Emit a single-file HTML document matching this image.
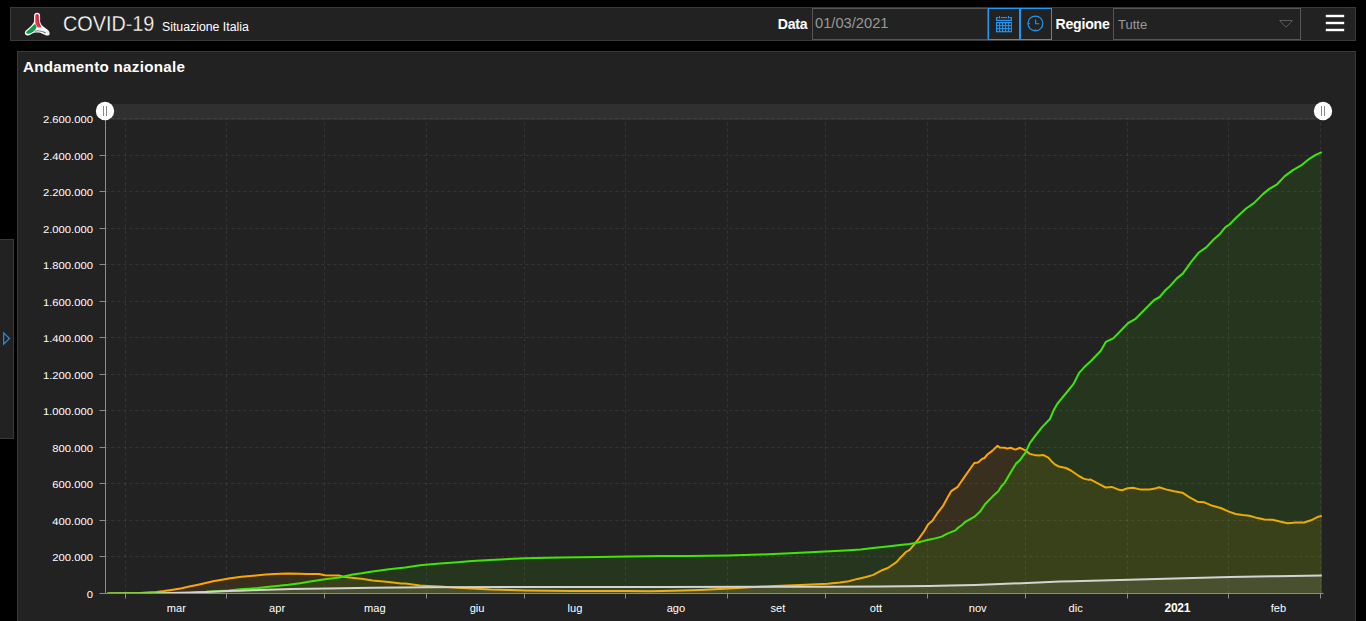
<!DOCTYPE html>
<html lang="it">
<head>
<meta charset="utf-8">
<title>COVID-19 Situazione Italia</title>
<style>
html,body{margin:0;padding:0;background:#000;width:1366px;height:621px;overflow:hidden;}
body{font-family:"Liberation Sans",sans-serif;color:#fff;position:relative;}
.hdr{position:absolute;left:10px;top:7px;width:1344px;height:32px;border:1px solid #3a3a3a;background:#222;}
.panel{position:absolute;left:17px;top:51px;width:1337px;height:600px;border:1px solid #3a3a3a;background:#222;}
.side{position:absolute;left:0;top:239px;width:13px;height:198px;border:1px solid #3a3a3a;border-left:none;background:#222;}
.abs{position:absolute;white-space:nowrap;line-height:1;}
.t1{left:63.3px;top:13px;font-size:22px;transform:scaleX(0.9);transform-origin:0 0;-webkit-text-stroke:0.3px #222;}
.t2{left:162px;top:21px;font-size:12.3px;}
.ptitle{left:23px;top:59.4px;font-size:15.2px;font-weight:700;letter-spacing:0.28px;}
.lbl{font-size:14.1px;font-weight:700;top:17px;letter-spacing:-0.22px;}
.inp{position:absolute;left:812px;top:8px;width:174px;height:30px;border:1px solid #555;background:#222;}
.inp span{position:absolute;left:2px;top:6.5px;font-size:14.7px;color:#999;line-height:1;}
.btn{position:absolute;top:8px;width:30px;height:30px;border:1px solid #2196f3;background:#222;}
.sel{position:absolute;left:1113px;top:8px;width:186px;height:30px;border:1px solid #555;background:#222;}
.sel span{position:absolute;left:4px;top:9.3px;font-size:13px;color:#999;line-height:1;}
.chart{position:absolute;left:0;top:0;}
svg{display:block;}
</style>
</head>
<body>
<div class="hdr"></div>
<div class="panel"></div>
<div class="side"></div>
<svg class="chart" style="position:absolute;left:0;top:0" width="60" height="45" viewBox="0 0 60 45">
<path d="M37.1,12.8 C38.9,12.8 40.1,13.9 40.1,15.6 L40.1,21.2 C40.4,23.2 41.3,24.9 43.2,26.6 C44.4,27.6 45.6,28.3 46.6,29 C48.2,30.1 49.3,31.3 49.6,33 C49.8,34.4 49.2,35.3 48,35.5 C47.2,35.6 46.4,35.5 45.6,35.2 C43.6,34.4 42.2,33.4 40.9,33 C39.6,32.6 38.3,32.6 36.9,32.6 C35.6,32.6 34.4,32.7 33.3,33 C32.2,33.3 31.6,33.9 30.6,34.5 C29.6,35 28.6,35.4 27.6,35.4 C26.4,35.4 25.4,34.9 25,33.8 C24.6,32.7 25,31.5 25.9,30.5 C26.9,29.4 27.9,28.8 28.9,28 C30.5,26.7 31.6,25.6 32.5,24.3 C33.3,23.2 33.9,22.2 34.1,21.2 L34.1,15.6 C34.1,13.9 35.3,12.8 37.1,12.8 Z" fill="#fff"/>
<path d="M37.1,14 C38.3,14 38.9,14.7 38.9,15.8 L38.9,21.2 C39.1,22.4 39.5,23.4 40.1,24.5 C40.5,25.4 41,26.2 41.6,27.2 L37.7,27.5 C37.2,26.8 36.8,26 36.4,25.2 C36,24.4 35.6,23.6 35.3,22.6 L35.3,15.8 C35.3,14.7 35.9,14 37.1,14 Z" fill="#ea2f4b"/>
<path d="M37.3,15 C37.9,17 38,19 38.3,21.3 C38.6,23 39.2,24.6 40,26" stroke="#c2203a" stroke-width="0.7" fill="none"/>
<path d="M35.1,23.4 C35.5,24.4 35.9,25.3 36.5,26.3 C36.6,27.1 36.4,27.8 36,28.6 C35.6,29.3 35.2,29.8 34.6,30.4 C34,31 33.5,31.5 32.8,32 C32,32.6 31.1,33.1 30.1,33.5 C29.2,33.8 28.3,33.9 27.4,33.8 C26.5,33.6 26,33.2 26.1,32.6 C26.2,32 26.5,31.5 27.1,31 C28,30.2 28.8,29.6 29.7,28.9 C30.9,27.9 31.9,26.9 32.9,25.8 C33.7,25 34.5,24.2 35.1,23.4 Z" fill="#17994a"/>
<path d="M34.6,31.2 C36.8,30.6 39.2,30.7 41.4,31.3 C43,31.7 44.4,32.4 45.8,33" stroke="#7c7c7c" stroke-width="1.1" fill="none"/>
<path d="M47.2,31.4 C47.8,32.2 48.1,33 48,33.9" stroke="#b5b5b5" stroke-width="0.6" fill="none"/>
</svg>
<div class="abs t1">COVID-19</div>
<div class="abs t2">Situazione Italia</div>
<div class="abs lbl" style="left:777.7px">Data</div>
<div class="inp"><span>01/03/2021</span></div>
<div class="btn" style="left:988px">
<svg width="30" height="30" viewBox="0 0 30 30" style="position:absolute;left:0;top:0">
<g fill="#2196f3">
<rect x="7" y="13" width="16" height="10.3"/>
<rect x="7" y="8" width="1.2" height="4"/><rect x="21.8" y="8" width="1.2" height="4"/>
<rect x="7" y="10.8" width="16" height="1.2"/>
<rect x="7" y="8" width="2.6" height="1.1"/><rect x="12" y="8" width="6" height="1.1"/><rect x="20.4" y="8" width="2.6" height="1.1"/>
<rect x="10" y="7" width="1.1" height="2.6"/><rect x="18.9" y="7" width="1.1" height="2.6"/>
</g>
<g fill="#222">
<rect x="8.2" y="14.2" width="1.9" height="1.9"/><rect x="11.2" y="14.2" width="1.9" height="1.9"/><rect x="14.2" y="14.2" width="1.9" height="1.9"/><rect x="17.2" y="14.2" width="1.9" height="1.9"/><rect x="20.2" y="14.2" width="1.9" height="1.9"/>
<rect x="8.2" y="17.2" width="1.9" height="1.9"/><rect x="11.2" y="17.2" width="1.9" height="1.9"/><rect x="14.2" y="17.2" width="1.9" height="1.9"/><rect x="17.2" y="17.2" width="1.9" height="1.9"/><rect x="20.2" y="17.2" width="1.9" height="1.9"/>
<rect x="8.2" y="20.2" width="1.9" height="1.9"/><rect x="11.2" y="20.2" width="1.9" height="1.9"/><rect x="14.2" y="20.2" width="1.9" height="1.9"/><rect x="17.2" y="20.2" width="1.9" height="1.9"/><rect x="20.2" y="20.2" width="1.9" height="1.9"/>
</g>
</svg>
</div>
<div class="btn" style="left:1020px">
<svg width="30" height="30" viewBox="0 0 30 30" style="position:absolute;left:0;top:0">
<g fill="none" stroke="#2196f3" stroke-width="1">
<circle cx="14.4" cy="14.4" r="7.4" stroke-width="1.25"/>
<path d="M14.6,10.4 V14.8 H18.2" stroke-width="1.1"/>
<path d="M7,14.6 H8.8 M14.4,20.2 V21.8"/>
</g>
</svg>
</div>
<div class="abs lbl" style="left:1055.5px">Regione</div>
<div class="sel"><span>Tutte</span>
<svg width="16" height="10" viewBox="0 0 16 10" style="position:absolute;left:163.5px;top:10.4px"><path d="M1.5,1.5 H14.5 L8,8.2 Z" fill="none" stroke="#5a5a5a" stroke-width="1"/></svg>
</div>
<svg style="position:absolute;left:1325px;top:13px" width="20" height="20" viewBox="0 0 20 20"><g fill="#fff"><rect x="0.8" y="1.8" width="18.4" height="2.4"/><rect x="0.8" y="8.8" width="18.4" height="2.4"/><rect x="0.8" y="15.8" width="18.4" height="2.4"/></g></svg>
<svg style="position:absolute;left:0;top:325px" width="14" height="26" viewBox="0 0 14 26"><path d="M3.7,7.9 L9.5,13.5 L3.7,19.1 Z" fill="none" stroke="#2196f3" stroke-width="1.15"/></svg>
<div class="abs ptitle">Andamento nazionale</div>
<svg class="chart" width="1366" height="621" viewBox="0 0 1366 621">
<rect x="105.4" y="104" width="1218.1" height="16" fill="#303030"/>
<g stroke="#fff" stroke-opacity="0.092" stroke-width="1" stroke-dasharray="3,3" fill="none"><line x1="105.3" y1="593.50" x2="1323.6" y2="593.50"/><line x1="105.3" y1="556.50" x2="1323.6" y2="556.50"/><line x1="105.3" y1="520.50" x2="1323.6" y2="520.50"/><line x1="105.3" y1="483.50" x2="1323.6" y2="483.50"/><line x1="105.3" y1="447.50" x2="1323.6" y2="447.50"/><line x1="105.3" y1="410.50" x2="1323.6" y2="410.50"/><line x1="105.3" y1="374.50" x2="1323.6" y2="374.50"/><line x1="105.3" y1="337.50" x2="1323.6" y2="337.50"/><line x1="105.3" y1="301.50" x2="1323.6" y2="301.50"/><line x1="105.3" y1="264.50" x2="1323.6" y2="264.50"/><line x1="105.3" y1="228.50" x2="1323.6" y2="228.50"/><line x1="105.3" y1="191.50" x2="1323.6" y2="191.50"/><line x1="105.3" y1="155.50" x2="1323.6" y2="155.50"/><line x1="105.3" y1="118.50" x2="1323.6" y2="118.50"/><line x1="125.50" y1="593.5" x2="125.50" y2="118.5"/><line x1="226.50" y1="593.5" x2="226.50" y2="118.5"/><line x1="324.50" y1="593.5" x2="324.50" y2="118.5"/><line x1="426.50" y1="593.5" x2="426.50" y2="118.5"/><line x1="524.50" y1="593.5" x2="524.50" y2="118.5"/><line x1="625.50" y1="593.5" x2="625.50" y2="118.5"/><line x1="727.50" y1="593.5" x2="727.50" y2="118.5"/><line x1="825.50" y1="593.5" x2="825.50" y2="118.5"/><line x1="927.50" y1="593.5" x2="927.50" y2="118.5"/><line x1="1025.50" y1="593.5" x2="1025.50" y2="118.5"/><line x1="1127.50" y1="593.5" x2="1127.50" y2="118.5"/><line x1="1228.50" y1="593.5" x2="1228.50" y2="118.5"/><line x1="1320.50" y1="593.5" x2="1320.50" y2="118.5"/></g>
<clipPath id="plot"><rect x="105.4" y="118.5" width="1218.1" height="474.5"/></clipPath><g clip-path="url(#plot)">
<path d="M107.4,593.4 L123.8,593.3 L140.1,592.9 L147.6,592.4 L156.5,591.9 L164.0,591.0 L172.9,589.7 L181.8,588.2 L189.2,586.6 L197.0,584.9 L205.6,583.0 L214.2,581.0 L222.0,579.7 L228.5,578.5 L241.6,576.7 L258.0,575.3 L265.6,574.5 L274.3,574.0 L287.4,573.4 L299.8,573.7 L307.1,574.0 L319.0,573.9 L324.9,575.2 L339.6,575.6 L343.1,576.7 L356.2,578.2 L361.5,578.7 L372.5,580.4 L388.9,582.1 L401.0,583.4 L405.3,583.6 L420.0,585.5 L428.2,586.0 L440.0,586.5 L457.6,587.7 L472.0,588.5 L490.4,589.5 L510.0,590.1 L526.4,590.5 L572.2,591.0 L627.9,591.1 L650.0,591.2 L673.7,590.8 L700.0,589.9 L729.3,588.6 L750.0,587.2 L775.2,586.1 L800.0,584.9 L827.5,583.8 L840.0,582.6 L848.7,581.3 L857.4,578.9 L866.1,577.0 L873.3,574.9 L882.0,570.2 L887.8,568.0 L896.5,562.2 L900.9,557.2 L905.9,552.0 L909.6,549.9 L913.9,544.8 L919.0,538.3 L924.3,531.0 L928.2,524.2 L932.4,520.7 L938.0,512.3 L943.1,505.8 L947.5,497.6 L951.2,491.2 L957.7,486.8 L963.5,478.4 L970.0,469.0 L974.3,463.0 L978.0,462.4 L982.3,458.8 L984.5,458.0 L987.4,454.5 L992.5,450.6 L997.5,445.8 L999.9,447.6 L1004.8,447.7 L1007.2,448.6 L1010.5,447.8 L1015.3,449.6 L1020.1,447.8 L1025.8,450.7 L1029.8,453.9 L1034.0,454.9 L1038.6,455.6 L1043.5,455.1 L1048.3,457.6 L1051.5,461.2 L1054.8,464.4 L1058.8,466.5 L1066.0,468.0 L1070.9,470.5 L1074.9,473.3 L1078.9,476.0 L1083.7,478.6 L1088.6,479.9 L1090.2,479.4 L1095.0,481.8 L1101.6,485.3 L1105.7,487.5 L1111.7,486.9 L1118.0,489.4 L1122.1,490.2 L1127.6,488.3 L1133.1,487.8 L1139.9,489.4 L1149.5,489.4 L1155.0,488.6 L1159.1,487.2 L1165.9,489.4 L1174.1,491.3 L1182.4,492.7 L1189.2,497.1 L1197.4,501.7 L1204.3,502.3 L1212.5,505.8 L1220.7,508.0 L1228.9,511.6 L1235.7,514.0 L1242.6,515.1 L1249.4,515.7 L1257.6,518.1 L1264.5,519.5 L1272.7,519.8 L1280.9,521.7 L1287.7,523.3 L1296.0,522.5 L1304.2,522.5 L1311.0,520.3 L1317.9,516.8 L1321.8,516.0 L1321.8,593.5 L107.4,593.5 Z" fill="#ffa500" fill-opacity="0.1"/>
<path d="M107.4,593.4 L123.8,593.3 L140.1,592.9 L147.6,592.4 L156.5,591.9 L164.0,591.0 L172.9,589.7 L181.8,588.2 L189.2,586.6 L197.0,584.9 L205.6,583.0 L214.2,581.0 L222.0,579.7 L228.5,578.5 L241.6,576.7 L258.0,575.3 L265.6,574.5 L274.3,574.0 L287.4,573.4 L299.8,573.7 L307.1,574.0 L319.0,573.9 L324.9,575.2 L339.6,575.6 L343.1,576.7 L356.2,578.2 L361.5,578.7 L372.5,580.4 L388.9,582.1 L401.0,583.4 L405.3,583.6 L420.0,585.5 L428.2,586.0 L440.0,586.5 L457.6,587.7 L472.0,588.5 L490.4,589.5 L510.0,590.1 L526.4,590.5 L572.2,591.0 L627.9,591.1 L650.0,591.2 L673.7,590.8 L700.0,589.9 L729.3,588.6 L750.0,587.2 L775.2,586.1 L800.0,584.9 L827.5,583.8 L840.0,582.6 L848.7,581.3 L857.4,578.9 L866.1,577.0 L873.3,574.9 L882.0,570.2 L887.8,568.0 L896.5,562.2 L900.9,557.2 L905.9,552.0 L909.6,549.9 L913.9,544.8 L919.0,538.3 L924.3,531.0 L928.2,524.2 L932.4,520.7 L938.0,512.3 L943.1,505.8 L947.5,497.6 L951.2,491.2 L957.7,486.8 L963.5,478.4 L970.0,469.0 L974.3,463.0 L978.0,462.4 L982.3,458.8 L984.5,458.0 L987.4,454.5 L992.5,450.6 L997.5,445.8 L999.9,447.6 L1004.8,447.7 L1007.2,448.6 L1010.5,447.8 L1015.3,449.6 L1020.1,447.8 L1025.8,450.7 L1029.8,453.9 L1034.0,454.9 L1038.6,455.6 L1043.5,455.1 L1048.3,457.6 L1051.5,461.2 L1054.8,464.4 L1058.8,466.5 L1066.0,468.0 L1070.9,470.5 L1074.9,473.3 L1078.9,476.0 L1083.7,478.6 L1088.6,479.9 L1090.2,479.4 L1095.0,481.8 L1101.6,485.3 L1105.7,487.5 L1111.7,486.9 L1118.0,489.4 L1122.1,490.2 L1127.6,488.3 L1133.1,487.8 L1139.9,489.4 L1149.5,489.4 L1155.0,488.6 L1159.1,487.2 L1165.9,489.4 L1174.1,491.3 L1182.4,492.7 L1189.2,497.1 L1197.4,501.7 L1204.3,502.3 L1212.5,505.8 L1220.7,508.0 L1228.9,511.6 L1235.7,514.0 L1242.6,515.1 L1249.4,515.7 L1257.6,518.1 L1264.5,519.5 L1272.7,519.8 L1280.9,521.7 L1287.7,523.3 L1296.0,522.5 L1304.2,522.5 L1311.0,520.3 L1317.9,516.8 L1321.8,516.0" fill="none" stroke="#ffa500" stroke-width="2" stroke-linejoin="round"/>
<path d="M107.4,593.4 L150.0,593.3 L170.0,593.0 L190.0,592.4 L205.6,591.8 L228.5,590.4 L240.0,589.2 L258.0,588.0 L269.3,586.7 L288.3,584.8 L300.0,583.2 L313.2,581.1 L326.7,579.0 L339.6,577.5 L343.5,576.4 L352.7,574.4 L361.5,573.3 L372.5,571.5 L388.9,569.3 L405.3,567.4 L420.0,565.2 L428.2,564.6 L440.0,563.5 L457.6,562.3 L472.1,561.1 L490.4,560.0 L524.3,558.3 L560.0,557.5 L598.4,556.9 L627.0,556.6 L660.0,556.1 L690.0,555.9 L727.5,555.5 L760.0,554.5 L784.7,553.6 L805.0,552.6 L825.1,551.6 L845.0,550.4 L860.5,549.4 L873.0,548.1 L887.4,546.5 L900.0,545.1 L909.6,544.1 L919.0,542.2 L925.0,540.6 L932.2,539.1 L941.7,536.6 L946.7,533.9 L955.4,530.4 L958.3,527.5 L962.0,525.0 L964.9,522.2 L970.7,518.8 L975.0,516.3 L980.1,511.6 L985.0,504.3 L992.5,496.6 L998.3,491.3 L1001.2,486.5 L1004.8,482.6 L1009.7,474.1 L1016.1,463.6 L1020.1,459.9 L1025.8,452.2 L1029.8,443.2 L1034.6,436.7 L1041.9,427.4 L1049.9,419.0 L1053.9,409.7 L1057.2,404.0 L1061.1,399.2 L1067.0,392.0 L1073.4,384.1 L1078.9,373.2 L1084.4,367.1 L1091.2,360.8 L1096.0,355.8 L1100.8,350.7 L1105.8,341.9 L1113.2,338.4 L1120.5,331.0 L1128.2,323.0 L1135.1,319.2 L1144.5,309.8 L1154.2,300.0 L1159.7,297.0 L1165.0,290.6 L1169.3,286.8 L1176.6,278.6 L1183.0,273.4 L1190.8,262.4 L1198.5,252.8 L1206.2,247.4 L1213.9,239.2 L1219.1,234.8 L1225.5,227.1 L1229.4,224.5 L1237.1,216.8 L1246.1,208.5 L1253.9,203.1 L1262.9,194.1 L1269.3,188.9 L1277.1,184.3 L1284.8,176.1 L1292.5,170.4 L1301.5,165.2 L1309.3,158.8 L1315.7,154.9 L1321.8,152.2 L1321.8,593.5 L107.4,593.5 Z" fill="#40e600" fill-opacity="0.1"/>
<path d="M107.4,593.4 L150.0,593.3 L170.0,593.0 L190.0,592.4 L205.6,591.8 L228.5,590.4 L240.0,589.2 L258.0,588.0 L269.3,586.7 L288.3,584.8 L300.0,583.2 L313.2,581.1 L326.7,579.0 L339.6,577.5 L343.5,576.4 L352.7,574.4 L361.5,573.3 L372.5,571.5 L388.9,569.3 L405.3,567.4 L420.0,565.2 L428.2,564.6 L440.0,563.5 L457.6,562.3 L472.1,561.1 L490.4,560.0 L524.3,558.3 L560.0,557.5 L598.4,556.9 L627.0,556.6 L660.0,556.1 L690.0,555.9 L727.5,555.5 L760.0,554.5 L784.7,553.6 L805.0,552.6 L825.1,551.6 L845.0,550.4 L860.5,549.4 L873.0,548.1 L887.4,546.5 L900.0,545.1 L909.6,544.1 L919.0,542.2 L925.0,540.6 L932.2,539.1 L941.7,536.6 L946.7,533.9 L955.4,530.4 L958.3,527.5 L962.0,525.0 L964.9,522.2 L970.7,518.8 L975.0,516.3 L980.1,511.6 L985.0,504.3 L992.5,496.6 L998.3,491.3 L1001.2,486.5 L1004.8,482.6 L1009.7,474.1 L1016.1,463.6 L1020.1,459.9 L1025.8,452.2 L1029.8,443.2 L1034.6,436.7 L1041.9,427.4 L1049.9,419.0 L1053.9,409.7 L1057.2,404.0 L1061.1,399.2 L1067.0,392.0 L1073.4,384.1 L1078.9,373.2 L1084.4,367.1 L1091.2,360.8 L1096.0,355.8 L1100.8,350.7 L1105.8,341.9 L1113.2,338.4 L1120.5,331.0 L1128.2,323.0 L1135.1,319.2 L1144.5,309.8 L1154.2,300.0 L1159.7,297.0 L1165.0,290.6 L1169.3,286.8 L1176.6,278.6 L1183.0,273.4 L1190.8,262.4 L1198.5,252.8 L1206.2,247.4 L1213.9,239.2 L1219.1,234.8 L1225.5,227.1 L1229.4,224.5 L1237.1,216.8 L1246.1,208.5 L1253.9,203.1 L1262.9,194.1 L1269.3,188.9 L1277.1,184.3 L1284.8,176.1 L1292.5,170.4 L1301.5,165.2 L1309.3,158.8 L1315.7,154.9 L1321.8,152.2" fill="none" stroke="#40e600" stroke-width="2" stroke-linejoin="round"/>
<path d="M107.4,593.8 L156.5,593.6 L172.9,593.1 L189.2,592.7 L205.6,592.0 L228.5,591.0 L240.0,590.8 L258.0,590.0 L284.0,589.2 L290.7,589.0 L326.7,588.4 L372.5,587.7 L428.2,587.2 L526.4,587.0 L660.0,586.9 L827.5,586.8 L880.0,586.6 L929.0,586.1 L950.0,585.6 L974.9,584.9 L1000.0,584.0 L1027.2,583.0 L1060.0,581.6 L1073.0,581.3 L1128.7,579.7 L1174.5,578.5 L1230.1,577.1 L1276.0,576.2 L1321.8,575.5 L1321.8,593.5 L107.4,593.5 Z" fill="#d3d3d3" fill-opacity="0.1"/>
<path d="M107.4,593.8 L156.5,593.6 L172.9,593.1 L189.2,592.7 L205.6,592.0 L228.5,591.0 L240.0,590.8 L258.0,590.0 L284.0,589.2 L290.7,589.0 L326.7,588.4 L372.5,587.7 L428.2,587.2 L526.4,587.0 L660.0,586.9 L827.5,586.8 L880.0,586.6 L929.0,586.1 L950.0,585.6 L974.9,584.9 L1000.0,584.0 L1027.2,583.0 L1060.0,581.6 L1073.0,581.3 L1128.7,579.7 L1174.5,578.5 L1230.1,577.1 L1276.0,576.2 L1321.8,575.5" fill="none" stroke="#d3d3d3" stroke-width="2" stroke-linejoin="round"/>
</g>
<g stroke="#8c8c8c" stroke-width="1" fill="none"><line x1="105.5" y1="118.5" x2="105.5" y2="594.0"/><line x1="99.5" y1="593.5" x2="1323.6" y2="593.5"/><line x1="99.5" y1="556.50" x2="105.5" y2="556.50"/><line x1="99.5" y1="520.50" x2="105.5" y2="520.50"/><line x1="99.5" y1="483.50" x2="105.5" y2="483.50"/><line x1="99.5" y1="447.50" x2="105.5" y2="447.50"/><line x1="99.5" y1="410.50" x2="105.5" y2="410.50"/><line x1="99.5" y1="374.50" x2="105.5" y2="374.50"/><line x1="99.5" y1="337.50" x2="105.5" y2="337.50"/><line x1="99.5" y1="301.50" x2="105.5" y2="301.50"/><line x1="99.5" y1="264.50" x2="105.5" y2="264.50"/><line x1="99.5" y1="228.50" x2="105.5" y2="228.50"/><line x1="99.5" y1="191.50" x2="105.5" y2="191.50"/><line x1="99.5" y1="155.50" x2="105.5" y2="155.50"/><line x1="125.50" y1="593.5" x2="125.50" y2="598.5"/><line x1="226.50" y1="593.5" x2="226.50" y2="598.5"/><line x1="324.50" y1="593.5" x2="324.50" y2="598.5"/><line x1="426.50" y1="593.5" x2="426.50" y2="598.5"/><line x1="524.50" y1="593.5" x2="524.50" y2="598.5"/><line x1="625.50" y1="593.5" x2="625.50" y2="598.5"/><line x1="727.50" y1="593.5" x2="727.50" y2="598.5"/><line x1="825.50" y1="593.5" x2="825.50" y2="598.5"/><line x1="927.50" y1="593.5" x2="927.50" y2="598.5"/><line x1="1025.50" y1="593.5" x2="1025.50" y2="598.5"/><line x1="1127.50" y1="593.5" x2="1127.50" y2="598.5"/><line x1="1228.50" y1="593.5" x2="1228.50" y2="598.5"/><line x1="1320.50" y1="593.5" x2="1320.50" y2="598.5"/></g>
<g fill="#fff" font-size="11.1" font-family="Liberation Sans, sans-serif"><text x="176.3" y="612.2" text-anchor="middle">mar</text><text x="277.1" y="612.2" text-anchor="middle">apr</text><text x="374.8" y="612.2" text-anchor="middle">mag</text><text x="477.1" y="612.2" text-anchor="middle">giu</text><text x="575.0" y="612.2" text-anchor="middle">lug</text><text x="675.9" y="612.2" text-anchor="middle">ago</text><text x="777.9" y="612.2" text-anchor="middle">set</text><text x="875.9" y="612.2" text-anchor="middle">ott</text><text x="977.7" y="612.2" text-anchor="middle">nov</text><text x="1075.7" y="612.2" text-anchor="middle">dic</text><text x="1177.3" y="612" text-anchor="middle" font-weight="700" font-size="12" letter-spacing="-0.3">2021</text><text x="1278.5" y="612.2" text-anchor="middle">feb</text></g>
<g fill="#fff" text-rendering="geometricPrecision" font-size="10" font-family="Liberation Sans, sans-serif" transform="translate(93,0) scale(1.124,1)"><text x="0" y="598.0" text-anchor="end">0</text><text x="0" y="561.0" text-anchor="end">200.000</text><text x="0" y="525.0" text-anchor="end">400.000</text><text x="0" y="488.0" text-anchor="end">600.000</text><text x="0" y="452.0" text-anchor="end">800.000</text><text x="0" y="415.0" text-anchor="end">1.000.000</text><text x="0" y="379.0" text-anchor="end">1.200.000</text><text x="0" y="342.0" text-anchor="end">1.400.000</text><text x="0" y="306.0" text-anchor="end">1.600.000</text><text x="0" y="269.0" text-anchor="end">1.800.000</text><text x="0" y="233.0" text-anchor="end">2.000.000</text><text x="0" y="196.0" text-anchor="end">2.200.000</text><text x="0" y="160.0" text-anchor="end">2.400.000</text><text x="0" y="123.0" text-anchor="end">2.600.000</text></g>
<circle cx="105.0" cy="111" r="9.2" fill="#fff"/>
<path d="M103.5,106 V116 M106.5,106 V116" stroke="#8a8a8a" stroke-width="1" fill="none"/>
<circle cx="1323.0" cy="111" r="9.2" fill="#fff"/>
<path d="M1321.5,106 V116 M1324.5,106 V116" stroke="#8a8a8a" stroke-width="1" fill="none"/>
</svg>
</body>
</html>
